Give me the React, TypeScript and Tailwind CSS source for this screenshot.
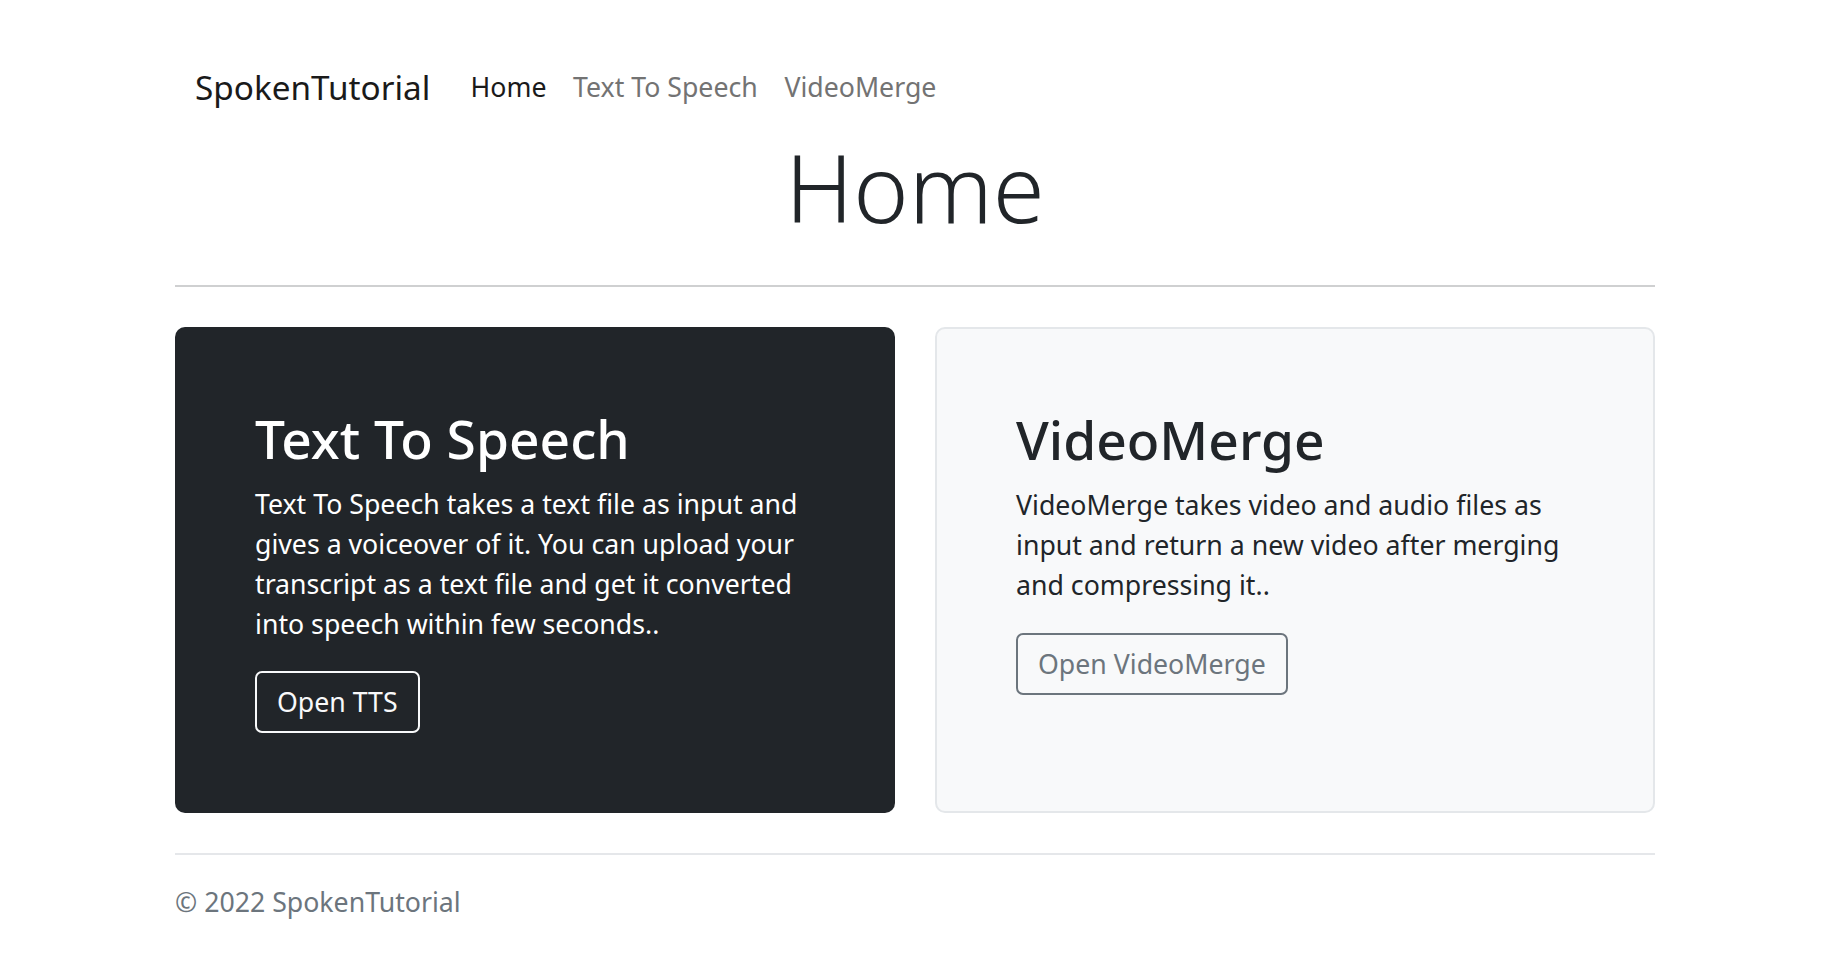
export default function App() {
	return (
		<div className="min-h-screen bg-white pt-[60px] font-['Noto_Sans',sans-serif] text-[#212529]">
			<div className="mx-auto w-[1480px]">
				<nav className="flex h-[55px] items-center pl-[20px]">
					<a className="mr-[27px] text-[33.3px] leading-[1.5] text-[#1a1a1a]">SpokenTutorial</a>
					<a className="px-[13.3px] text-[26.7px] leading-[1.5] text-[#1a1a1a]">Home</a>
					<a className="px-[13.3px] text-[26.7px] leading-[1.5] text-[#737373]">Text To Speech</a>
					<a className="px-[13.3px] text-[26.7px] leading-[1.5] text-[#737373]">VideoMerge</a>
				</nav>

				<h1 className="mt-[16px] text-center text-[94px] font-light leading-[1.2]">Home</h1>

				<div className="mt-[41px] h-[2px] bg-[#cfd0d1]" />

				<section className="mt-[40px] grid grid-cols-2 gap-[40px]">
					<div className="rounded-[10px] bg-[#212529] p-[80px] text-white">
						<h2 className="mb-[13.3px] text-[53.3px] font-medium leading-[1.2]">Text To Speech</h2>
						<p className="mb-[26.7px] text-[26.7px] leading-[1.5]">
							Text To Speech takes a text file as input and gives a voiceover of it. You can upload your
							transcript as a text file and get it converted into speech within few seconds..
						</p>
						<button className="rounded-[7px] border-2 border-[#f8f9fa] px-[20px] py-[9px] text-[26.7px] leading-[1.5] text-[#f8f9fa]">
							Open TTS
						</button>
					</div>
					<div className="rounded-[10px] border-2 border-[#e4e7ea] bg-[#f8f9fa] px-[79px] pt-[79px] pb-[78px]">
						<h2 className="mb-[13.3px] text-[53.3px] font-medium leading-[1.2]">VideoMerge</h2>
						<p className="mb-[28px] text-[26.7px] leading-[1.5]">
							VideoMerge takes video and audio files as input and return a new video after merging and
							compressing it..
						</p>
						<button className="rounded-[7px] border-2 border-[#6c757d] px-[20px] py-[9px] text-[26.7px] leading-[1.5] text-[#6c757d]">
							Open VideoMerge
						</button>
					</div>
				</section>

				<footer className="mt-[40px] border-t-2 border-[#e5e7ea] pt-[26.7px] text-[26.7px] leading-[1.5] text-[#6c757d]">
					© 2022 SpokenTutorial
				</footer>
			</div>
		</div>
	);
}
